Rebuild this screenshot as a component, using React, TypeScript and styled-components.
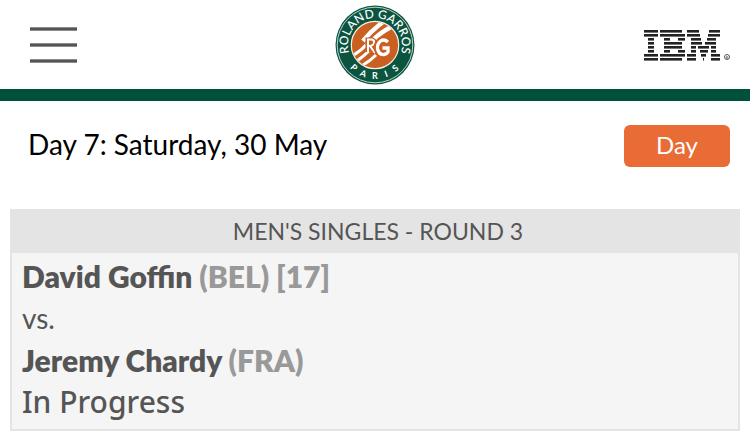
import React from "react";
import styled, { createGlobalStyle } from "styled-components";

const GlobalStyle = createGlobalStyle`
  * { box-sizing: border-box; }
  body { margin: 0; background: #fff; font-family: Lato, "Open Sans", sans-serif; }
`;

const Header = styled.header`
  display: grid;
  grid-template-columns: 1fr auto 1fr;
  align-items: center;
  padding: 5px 20px 4px;
  border-bottom: 12px solid #00503c;
`;

const MenuButton = styled.button`
  display: flex;
  flex-direction: column;
  gap: 12px;
  width: 47px;
  margin-left: 10px;
  padding: 0;
  border: 0;
  background: none;
  cursor: pointer;
`;

const MenuBar = styled.span`
  height: 4px;
  background: #555;
  border: solid #8b8b8b;
  border-width: 1px 0;
`;

const Emblem = styled.svg`
  display: block;
  width: 80px;
  height: 80px;
`;

const SponsorLogo = styled.svg`
  display: block;
  justify-self: end;
  width: 86px;
  height: 31px;
`;

const DayBar = styled.section`
  display: flex;
  align-items: flex-start;
  justify-content: space-between;
  padding: 24px 20px 42px 28px;
`;

const DayTitle = styled.h1`
  margin: 0;
  font-size: 28px;
  line-height: 38px;
  font-weight: 400;
  color: #000;
`;

const DayButton = styled.button`
  width: 106px;
  height: 42px;
  padding: 0 0 2px;
  border: 0;
  border-radius: 6px;
  background: #e96b36;
  color: #fff;
  font: 400 24px/40px Lato, "Open Sans", sans-serif;
  cursor: pointer;
`;

const Match = styled.article`
  margin: 0 10px;
  border: 2px solid #e4e4e4;
  background: #f5f5f5;
  color: #555;
`;

const MatchTitle = styled.h2`
  margin: 0;
  padding: 0 0 2px 6px;
  background: #e4e4e4;
  font-size: 23px;
  line-height: 40px;
  font-weight: 400;
  text-align: center;
`;

const MatchBody = styled.div`
  padding: 2px 10px 6px;
  line-height: 42px;
`;

const Player = styled.p`
  margin: 0;
  font-size: 30px;
  font-weight: 800;
`;

const Country = styled.span`
  color: #999;
`;

const Versus = styled.p`
  margin: 0;
  font-size: 28px;
`;

const Status = styled.p`
  margin: 0;
  font-family: "Noto Sans", sans-serif;
  font-size: 30px;
  font-weight: 500;
`;

/* Bars of each row of the sponsor mark: [start, end] pairs, rows 4 units apart. */
const SPONSOR_ROWS: number[][][] = [
  [[0, 14], [16, 38], [43, 55], [65, 76]],
  [[0, 14], [16, 41], [43, 56], [64, 76]],
  [[4, 10], [20, 26], [34, 41], [47, 57], [63, 72]],
  [[4, 10], [20, 38], [47, 58], [61, 72]],
  [[4, 10], [20, 38], [47, 52], [54, 65], [67, 72]],
  [[4, 10], [20, 26], [34, 41], [47, 52], [56, 64], [67, 72]],
  [[0, 14], [16, 41], [43, 52], [57, 62], [67, 76]],
  [[0, 14], [16, 38], [43, 52], [59, 60], [67, 76]],
];

const PARIS = [
  { letter: "P", angle: 43 },
  { letter: "A", angle: 22 },
  { letter: "R", angle: 0 },
  { letter: "I", angle: -21 },
  { letter: "S", angle: -41 },
];

function RolandGarrosEmblem() {
  return (
    <Emblem viewBox="0 0 80 80" role="img" aria-label="Roland Garros Paris">
      <defs>
        <path id="ring" d="M40 67 A27 27 0 0 1 40 13 A27 27 0 0 1 40 67" />
        <clipPath id="disc"><circle cx="40" cy="40" r="23" /></clipPath>
      </defs>
      <circle cx="40" cy="40" r="39.5" fill="#0b5540" />
      <circle cx="40" cy="40" r="37.8" fill="none" stroke="#e9f0ec" strokeWidth="0.8" />
      <circle cx="40" cy="40" r="23.7" fill="#c95f20" stroke="#f6eee6" strokeWidth="1.2" />
      <g fill="#fff" fontFamily="Lato, sans-serif">
        <text fontSize="12" fontWeight="500" textAnchor="middle">
          <textPath href="#ring" startOffset="50%">ROLAND GARROS</textPath>
        </text>
        {PARIS.map(({ letter, angle }) => (
          <text key={letter} x="40" y="74" fontSize="9" fontWeight="700" textAnchor="middle" transform={`rotate(${angle} 40 40)`}>
            {letter}
          </text>
        ))}
      </g>
      <g clipPath="url(#disc)" fill="none">
        <path d="M28 36 Q36 26 48 17 M39 34 Q45 28 56 22" stroke="#fff" strokeWidth="4.5" />
        <path d="M17 51 Q26 46 33 38 M22 56 Q29 51 36 44 M28 60 Q35 56 41 50" stroke="#fff" strokeWidth="3" />
        <path d="M33 47 V35 H37.500 Q40 36 39 39 Q37.500 41.500 35 41.500 L40 48" stroke="#c95f20" strokeWidth="5" />
        <path d="M33 47 V34.500 H37 Q40 35.500 39 38.500 Q37.500 41 35 41 L40 48" stroke="#fff" strokeWidth="2" />
        <path d="M53 36 Q49 33 45 35.500 Q41 39 42 45 Q44 50 49 49 L53 47 V42 H47.500" stroke="#c95f20" strokeWidth="6" />
        <path d="M53 37 Q49 33.500 45.500 36 Q42 39 42.500 44 Q44 50 49 49.500 Q52 49 53 47 V43 H47.500" stroke="#fff" strokeWidth="3.300" />
      </g>
    </Emblem>
  );
}

function IbmLogo() {
  return (
    <SponsorLogo viewBox="0 0 86 31" role="img" aria-label="IBM">
      <g fill="#222">
        {SPONSOR_ROWS.map((bars, row) =>
          bars.map(([start, end]) => (
            <rect key={`${row}-${start}`} x={start} y={row * 4} width={end - start} height="2.6" />
          )),
        )}
      </g>
      <circle cx="83" cy="27" r="2.5" fill="none" stroke="#555" />
      <text x="83" y="28.5" fontSize="4" textAnchor="middle" fontFamily="Lato, sans-serif" fill="#333">R</text>
    </SponsorLogo>
  );
}

export default function App() {
  return (
    <>
      <GlobalStyle />
      <Header>
        <MenuButton aria-label="Menu">
          <MenuBar />
          <MenuBar />
          <MenuBar />
        </MenuButton>
        <RolandGarrosEmblem />
        <IbmLogo />
      </Header>
      <main>
        <DayBar>
          <DayTitle>Day 7: Saturday, 30 May</DayTitle>
          <DayButton>Day</DayButton>
        </DayBar>
        <Match>
          <MatchTitle>MEN'S SINGLES - ROUND 3</MatchTitle>
          <MatchBody>
            <Player>David Goffin <Country>(BEL) [17]</Country></Player>
            <Versus>vs.</Versus>
            <Player>Jeremy Chardy <Country>(FRA)</Country></Player>
            <Status>In Progress</Status>
          </MatchBody>
        </Match>
      </main>
    </>
  );
}
